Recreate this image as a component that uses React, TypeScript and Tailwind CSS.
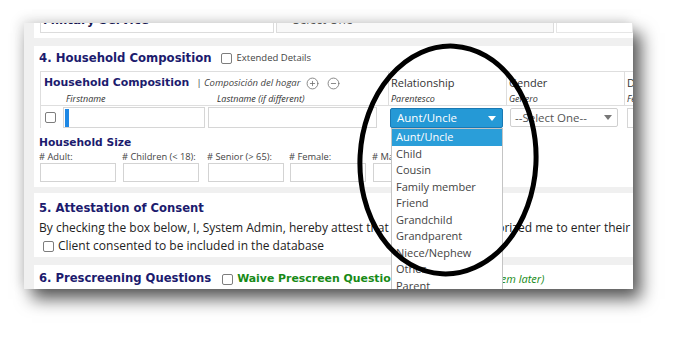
import React from "react";
import { CirclePlus, CircleMinus } from "lucide-react";

const HEAD = "font-['DejaVu_Sans',sans-serif] font-bold text-[#1c1b6e]";

function Check() {
  return (
    <span className="inline-block w-[11px] h-[11px] rounded-[2px] border border-[#7d7d7d] bg-white shrink-0" />
  );
}

function Caret({ color }: { color: string }) {
  return (
    <svg width="8" height="5" viewBox="0 0 8 5">
      <path d="M0 0H8L4 5Z" fill={color} />
    </svg>
  );
}

const OPTIONS = [
  "Aunt/Uncle",
  "Child",
  "Cousin",
  "Family member",
  "Friend",
  "Grandchild",
  "Grandparent",
  "Niece/Nephew",
  "Other",
  "Parent",
];

const SIZE_COLS = [
  { label: "# Adult:", w: "w-[83px]" },
  { label: "# Children (< 18):", w: "w-[85px]" },
  { label: "# Senior (> 65):", w: "w-[82px]" },
  { label: "# Female:", w: "w-[83px]" },
  { label: "# Male:", w: "w-[83px]" },
];

export default function App() {
  return (
    <div className="relative w-[687px] h-[342px] bg-white overflow-hidden font-['Open_Sans',sans-serif]">
      <div className="pl-[24px] pt-[23px]">
        <div className="relative w-[609px] h-[266px] overflow-hidden bg-[#f0f0f0] pl-[10px] flex flex-col shadow-[8px_10px_16px_rgba(0,0,0,0.65),-3px_-3px_12px_rgba(0,0,0,0.12)]">
          {/* top panel (clipped) */}
          <div className="h-[15px] shrink-0 bg-white overflow-hidden">
            <div className="flex -mt-[14px] pl-[6px]">
              <div className="w-[243px] h-[24px] border border-[#dcdcdc] bg-white pt-[3px] pl-[2px] text-[12px] leading-[14px] font-['DejaVu_Sans',sans-serif] font-bold text-[#15154f] whitespace-nowrap">
                Military Service
              </div>
              <div className="ml-[2px] w-[288px] h-[24px] border border-[#dcdcdc] bg-[#f8f8f8] pt-[3px] pl-[16px] text-[12px] leading-[14px] text-[#555]">
                Select One
              </div>
              <div className="ml-[2px] w-[80px] h-[24px] border border-[#e6e6e6] bg-white" />
            </div>
          </div>

          {/* section 4 */}
          <div className="mt-[8px] h-[141px] shrink-0 bg-white pl-[5px]">
            <div className="h-[25px] flex items-center whitespace-nowrap">
              <span className={`${HEAD} text-[11.7px]`}>4. Household Composition</span>
              <span className="ml-[9px] flex">
                <Check />
              </span>
              <span className="ml-[5px] text-[9.5px] text-[#444]">Extended Details</span>
            </div>

            <div className="ml-[1px]">
              {/* header */}
              <div className="flex h-[35px] border-t border-b border-[#dedede] whitespace-nowrap">
                <div className="w-[349px] shrink-0 border-l border-r border-[#dedede]">
                  <div className="flex items-center h-[22px] pl-[3px]">
                    <span className={`${HEAD} text-[10.9px]`}>Household Composition</span>
                    <span className="ml-[7px] text-[9.5px] italic text-[#444]">| Composición del hogar</span>
                    <span className="ml-[6px] flex items-center gap-[8px] text-[#707070]">
                      <CirclePlus size={13} strokeWidth={1.5} />
                      <CircleMinus size={13} strokeWidth={1.5} />
                    </span>
                  </div>
                  <div className="relative h-[10px] text-[9px] leading-[10px] italic text-[#333]">
                    <span className="absolute left-[25px]">Firstname</span>
                    <span className="absolute left-[176px]">Lastname (if different)</span>
                  </div>
                </div>
                <div className="w-[118px] shrink-0 border-r border-[#dedede] pl-[2px]">
                  <div className="h-[22px] flex items-center text-[11px] text-[#333]">Relationship</div>
                  <div className="h-[10px] leading-[10px] text-[9px] italic text-[#333]">Parentesco</div>
                </div>
                <div className="w-[118px] shrink-0 border-r border-[#dedede] pl-[2px]">
                  <div className="h-[22px] flex items-center text-[11px] text-[#333]">Gender</div>
                  <div className="h-[10px] leading-[10px] text-[9px] italic text-[#333]">Genero</div>
                </div>
                <div className="w-[100px] shrink-0 pl-[2px]">
                  <div className="h-[22px] flex items-center text-[11px] text-[#333]">Date of Birth</div>
                  <div className="h-[10px] leading-[10px] text-[9px] italic text-[#333]">Fecha de nacimiento</div>
                </div>
              </div>

              {/* row */}
              <div className="flex h-[22px] items-start">
                <div className="w-[23px] h-[22px] shrink-0 border-l border-[#dedede] flex items-center pl-[4px]">
                  <Check />
                </div>
                <div className="w-[142px] h-[21px] mt-[1px] shrink-0 border border-[#d6d6d6] bg-white flex items-center">
                  <div className="ml-[1px] w-[4px] h-[18px] bg-[#1e88e5]" />
                </div>
                <div className="ml-[3px] w-[169px] h-[21px] mt-[1px] shrink-0 border border-[#d6d6d6] bg-white" />
                <div className="relative ml-[13px] w-[113px] h-[20px] mt-[2px] shrink-0 rounded-[2px] border border-[#1a79b3] bg-[#2599d6] flex items-center justify-between pl-[6px] pr-[6px] text-[11.5px] text-white">
                  <span>Aunt/Uncle</span>
                  <Caret color="#ffffff" />
                  <div className="absolute left-[0px] top-[19px] w-[112px] h-[170px] border border-[#c4c4c4] bg-white z-10">
                    {OPTIONS.map((o, i) => (
                      <div
                        key={o}
                        className={
                          i === 0
                            ? "h-[16.5px] leading-[16.5px] pl-[4px] text-[11px] bg-[#2a9ed9] text-white"
                            : "h-[16.5px] leading-[16.5px] pl-[4px] text-[11px] text-[#444]"
                        }
                      >
                        {o}
                      </div>
                    ))}
                  </div>
                </div>
                <div className="ml-[7px] w-[108px] h-[19px] mt-[2px] shrink-0 rounded-[2px] border border-[#cfcfcf] bg-white flex items-center justify-between pl-[4px] pr-[5px] text-[11.5px] text-[#555] whitespace-nowrap">
                  <span>--Select One--</span>
                  <Caret color="#777777" />
                </div>
                <div className="ml-[9px] w-[80px] h-[20px] mt-[2px] shrink-0 border border-[#d6d6d6] bg-white" />
              </div>
            </div>

            <div className={`${HEAD} mt-[8px] h-[14px] leading-[14px] text-[10.7px]`}>Household Size</div>
            <div className="flex">
              {SIZE_COLS.map((c) => (
                <div key={c.label} className={`${c.w} shrink-0`}>
                  <div className="h-[13px] leading-[13px] text-[9.3px] text-[#444] whitespace-nowrap">{c.label}</div>
                  <div className="ml-[1px] w-[76px] h-[19px] border border-[#d3d3d3] bg-white" />
                </div>
              ))}
            </div>
          </div>

          {/* section 5 */}
          <div className="mt-[6px] h-[64px] shrink-0 bg-white pl-[5px] whitespace-nowrap">
            <div className={`${HEAD} pt-[4px] h-[26px] leading-[22px] text-[11.6px]`}>5. Attestation of Consent</div>
            <div className="h-[18px] leading-[18px] text-[12px] text-[#222]">
              By checking the box below, I, System Admin, hereby attest that this client has authorized me to enter their information.
            </div>
            <div className="h-[18px] flex items-center pl-[4px] gap-[4px] text-[12px] text-[#222]">
              <Check />
              <span>Client consented to be included in the database</span>
            </div>
          </div>

          {/* section 6 */}
          <div className="mt-[8px] flex-1 bg-white pl-[5px] whitespace-nowrap">
            <div className="pt-[4px] h-[24px] flex items-center">
              <span className={`${HEAD} text-[11.6px]`}>6. Prescreening Questions</span>
              <span className="ml-[11px] flex">
                <Check />
              </span>
              <span className="ml-[4px] font-['DejaVu_Sans',sans-serif] font-bold text-[10.9px] text-[#178a17]">
                Waive Prescreen Questions
              </span>
              <span className="ml-[4px] italic text-[11px] text-[#178a17]">(you can answer them later)</span>
            </div>
          </div>
        </div>
      </div>

      {/* hand-drawn annotation ellipse */}
      <svg
        className="absolute left-0 top-0 pointer-events-none z-20"
        width="687"
        height="342"
        viewBox="0 0 687 342"
      >
        <ellipse
          cx="448"
          cy="160"
          rx="88"
          ry="114"
          fill="none"
          stroke="#000"
          strokeWidth="5"
          transform="rotate(3 448 160)"
        />
      </svg>
    </div>
  );
}
